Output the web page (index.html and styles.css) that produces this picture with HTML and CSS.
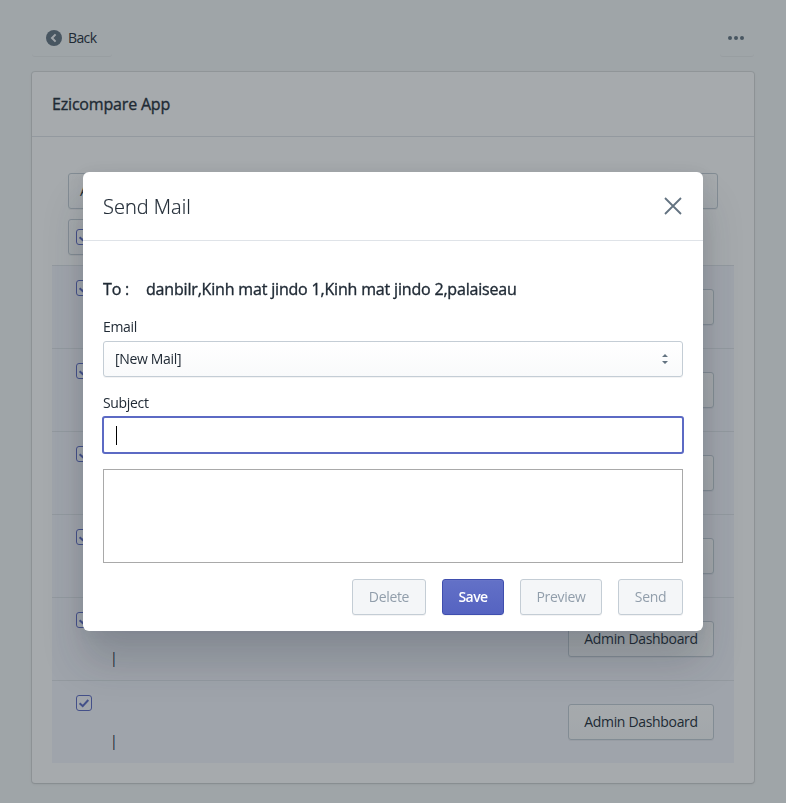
FILE: index.html
```
<!DOCTYPE html>
<html lang="en">
<head>
<meta charset="utf-8">
<title>Ezicompare App</title>
<link rel="stylesheet" href="styles.css">
</head>
<body>
<svg class="defs" width="0" height="0">
  <symbol id="check" viewBox="0 0 14 14"><path d="M2.6 7.2 5.7 10.1 11.3 4" fill="none" stroke="currentColor" stroke-width="2"/></symbol>
</svg>
<div class="page">
  <div class="topbar">
    <button class="plain"><svg width="16" height="16" viewBox="0 0 16 16"><circle cx="8" cy="8" r="8" fill="#637381"/><path d="M9.6 4.4 6 8l3.6 3.6" fill="none" stroke="#f4f6f8" stroke-width="2"/></svg><span class="back">Back</span></button>
    <button class="plain more"><svg width="16" height="4" viewBox="0 0 16 4" fill="#637381"><circle cx="2" cy="2" r="2"/><circle cx="8" cy="2" r="2"/><circle cx="14" cy="2" r="2"/></svg></button>
  </div>
  <div class="card">
    <h2 class="card-title"><span>Ezicompare App</span></h2>
    <div class="filters">
      <div class="btn filter-all">All</div>
      <div class="btn filter-check"><span class="check"><svg><use href="#check"/></svg></span></div>
    </div>
    <div class="list">
      <div class="row"><span class="check"><svg><use href="#check"/></svg></span><div class="btn admin"></div></div>
      <div class="row"><span class="check"><svg><use href="#check"/></svg></span><div class="btn admin"></div></div>
      <div class="row"><span class="check"><svg><use href="#check"/></svg></span><div class="btn admin"></div></div>
      <div class="row"><span class="check"><svg><use href="#check"/></svg></span><div class="btn admin"></div></div>
      <div class="row"><span class="check"><svg><use href="#check"/></svg></span><span class="pipe">|</span><div class="btn admin"><span>Admin Dashboard</span></div></div>
      <div class="row"><span class="check"><svg><use href="#check"/></svg></span><span class="pipe">|</span><div class="btn admin"><span>Admin Dashboard</span></div></div>
    </div>
  </div>
</div>
<div class="backdrop">
  <div class="modal">
    <div class="modal-head">
      <h1 class="modal-title">Send Mail</h1>
      <svg width="18" height="18" viewBox="0 0 18 18"><path d="M1 1 17 17M17 1 1 17" stroke="#637381" stroke-width="1.8"/></svg>
    </div>
    <div class="modal-body">
      <div class="to"><span class="to-label">To :</span><span class="to-names">danbilr,Kinh mat jindo 1,Kinh mat jindo 2,palaiseau</span></div>
      <div class="label email-label"><span>Email</span></div>
      <div class="btn select"><span class="select-value">[New Mail]</span><svg width="6" height="10" viewBox="0 0 6 10" fill="#637381"><path d="M0 3 3 0 6 3zM0 7 3 10 6 7z"/></svg></div>
      <div class="label subject-label"><span>Subject</span></div>
      <div class="input"><span class="caret"></span></div>
      <div class="textarea"></div>
      <div class="actions">
        <div class="btn disabled delete"><span>Delete</span></div>
        <div class="btn primary save"><span>Save</span></div>
        <div class="btn disabled preview"><span>Preview</span></div>
        <div class="btn disabled send"><span>Send</span></div>
      </div>
    </div>
  </div>
</div>
</body>
</html>
```

FILE: styles.css
```
* { box-sizing: border-box; }
body {
  margin: 0;
  height: 803px;
  overflow: hidden;
  background: #f4f7f7;
  color: #212b36;
  font: 14px/20px "Segoe UI", "Open Sans", sans-serif;
  letter-spacing: -0.33px;
}
h1, h2 { margin: 0; }
.defs { display: block; height: 0; }
.page { padding: 20px 32px; }
.topbar { display: flex; justify-content: space-between; height: 52px; }
.plain {
  display: flex;
  align-items: center;
  gap: 6px;
  width: 80px;
  height: 36px;
  padding: 0 0 0 14px;
  border: 0;
  border-radius: 3px;
  background: transparent;
  box-shadow: 0 1px 0 rgba(22, 29, 37, .05);
  color: inherit;
  font: inherit;
  letter-spacing: -0.6px;
}
.more { width: 34px; padding-left: 8px; }
.card {
  height: 711px;
  background: #fff;
  border-radius: 3px;
  box-shadow: 0 0 0 1px rgba(63, 63, 68, .12), 0 1px 3px rgba(63, 63, 68, .15);
}
.card-title {
  height: 65px;
  padding: 20px;
  border-bottom: 1px solid #dfe3e8;
  font-size: 16px;
  line-height: 24px;
  font-weight: 400;
  letter-spacing: -0.18px;
  -webkit-text-stroke: 0.35px currentColor;
}
.filters {
  display: flex;
  flex-direction: column;
  gap: 10px;
  height: 128px;
  padding: 36px 36px 0;
}
.btn {
  display: flex;
  align-items: center;
  justify-content: center;
  height: 36px;
  flex: none;
  border: 1px solid #c4cdd5;
  border-radius: 3px;
  background: linear-gradient(#fff, #f9fafb);
  box-shadow: 0 1px 0 rgba(22, 29, 37, .05);
  white-space: nowrap;
}
.filter-all { justify-content: flex-start; padding-left: 11px; }
.filter-check { width: 50px; justify-content: flex-start; padding-left: 7px; }
.check {
  display: block;
  width: 16px;
  height: 16px;
  border: 1px solid #5c6ac4;
  border-radius: 3px;
  background: #fff;
  color: #5c6ac4;
}
.check svg { display: block; width: 14px; height: 14px; }
.list { margin: 0 20px; }
.row {
  display: flex;
  height: 83px;
  padding: 14px 20px 0 24px;
  border-top: 1px solid #dfe3e8;
  background: #f4f5fc;
}
.row .check { background: #f8f9fe; }
.pipe { margin: 36px 0 0 18px; }
.admin { width: 146px; margin: 9px 0 0 auto; }
.backdrop {
  position: fixed;
  inset: 0;
  display: flex;
  align-items: center;
  justify-content: center;
  background: rgba(33, 43, 50, .4);
}
.modal {
  width: 620px;
  height: 459px;
  background: #fff;
  border-radius: 6px;
  box-shadow: 0 31px 41px 0 rgba(32, 42, 53, .2), 0 2px 16px 0 rgba(32, 42, 54, .08);
}
.modal-head {
  display: flex;
  align-items: center;
  justify-content: space-between;
  height: 69px;
  padding: 0 21px 0 20px;
  border-bottom: 1px solid #dfe3e8;
}
.modal-title {
  padding-top: 2px;
  font-size: 20px;
  line-height: 28px;
  font-weight: 300;
  letter-spacing: 0;
  -webkit-text-stroke: 0.2px currentColor;
}
.modal-body { padding: 36px 20px 0; }
.to {
  display: flex;
  height: 24px;
  font-size: 16px;
  line-height: 24px;
  letter-spacing: -0.18px;
  -webkit-text-stroke: 0.35px currentColor;
}
.to-label { width: 43px; }
.label { height: 20px; }
.email-label { margin: 16px 0 4px; }
.subject-label { margin: 16px 0 3px; }
.select { justify-content: space-between; padding: 0 14px 0 11px; }
.input {
  display: flex;
  align-items: center;
  height: 38px;
  margin: 0 -1px;
  padding-left: 12px;
  border: 2px solid #5c6ac4;
  border-radius: 3px;
}
.caret { width: 1px; height: 19px; background: #000; }
.textarea { height: 94px; margin-top: 15px; border: 1px solid #a9a9a9; }
.actions { display: flex; justify-content: flex-end; gap: 16px; margin-top: 16px; }
.disabled { background: #f4f6f8; color: #919eab; }
.primary {
  border-color: #3f4eae;
  background: linear-gradient(#6371c7, #5563c1);
  box-shadow: inset 0 1px 0 #6774c8, 0 1px 0 rgba(22, 29, 37, .05);
  color: #fff;
  font-weight: 600;
}
.save span { letter-spacing: -0.6px; }
.delete { width: 74px; }
.save { width: 62px; }
.preview { width: 82px; }
.send { width: 65px; }
```
